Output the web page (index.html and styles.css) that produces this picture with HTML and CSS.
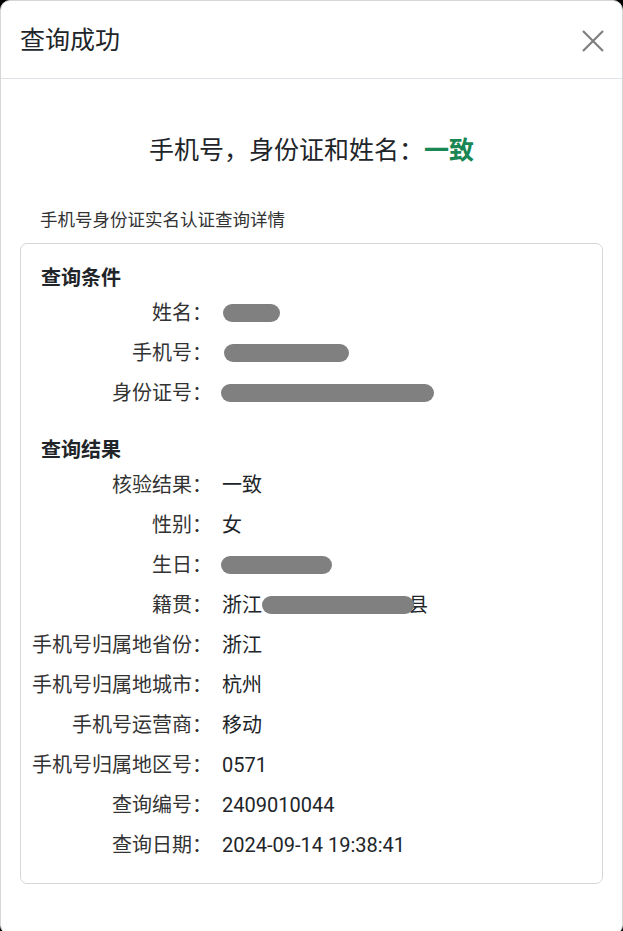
FILE: index.html
```html
<!DOCTYPE html>
<html lang="zh-CN">
<head>
    <meta charset="UTF-8">
    <meta name="viewport" content="width=device-width, initial-scale=1.0">
    <title>查询成功</title>
    <link rel="stylesheet" href="styles.css">
</head>
<body>
    <div class="modal">
        <div class="modal-header">
            <h5 class="modal-title">查询成功</h5>
            <button type="button" class="btn-close" aria-label="关闭">
                <svg width="22" height="22" viewBox="0 0 22 22">
                    <path d="M1 1 L21 21 M21 1 L1 21" stroke="#7f7f7f" stroke-width="2.2" fill="none"/>
                </svg>
            </button>
        </div>

        <div class="modal-body">
            <h4 class="result">手机号，身份证和姓名：<strong class="ok">一致</strong></h4>
            <p class="subtitle">手机号身份证实名认证查询详情</p>

            <div class="card">
                <!-- 查询条件 -->
                <h6 class="section-title">查询条件</h6>
                <div class="info-row">
                    <span class="label">姓名：</span>
                    <span class="value"><span class="mask mask-name"></span></span>
                </div>
                <div class="info-row">
                    <span class="label">手机号：</span>
                    <span class="value"><span class="mask mask-phone"></span></span>
                </div>
                <div class="info-row">
                    <span class="label">身份证号：</span>
                    <span class="value"><span class="mask mask-id"></span></span>
                </div>

                <!-- 查询结果 -->
                <h6 class="section-title second">查询结果</h6>
                <div class="info-row">
                    <span class="label">核验结果：</span>
                    <span class="value">一致</span>
                </div>
                <div class="info-row">
                    <span class="label">性别：</span>
                    <span class="value">女</span>
                </div>
                <div class="info-row">
                    <span class="label">生日：</span>
                    <span class="value"><span class="mask mask-birth"></span></span>
                </div>
                <div class="info-row">
                    <span class="label">籍贯：</span>
                    <span class="value">浙江<span class="mask mask-addr"></span>县</span>
                </div>
                <div class="info-row">
                    <span class="label">手机号归属地省份：</span>
                    <span class="value">浙江</span>
                </div>
                <div class="info-row">
                    <span class="label">手机号归属地城市：</span>
                    <span class="value">杭州</span>
                </div>
                <div class="info-row">
                    <span class="label">手机号运营商：</span>
                    <span class="value">移动</span>
                </div>
                <div class="info-row">
                    <span class="label">手机号归属地区号：</span>
                    <span class="value">0571</span>
                </div>
                <div class="info-row">
                    <span class="label">查询编号：</span>
                    <span class="value">2409010044</span>
                </div>
                <div class="info-row">
                    <span class="label">查询日期：</span>
                    <span class="value">2024-09-14 19:38:41</span>
                </div>
            </div>
        </div>
    </div>
</body>
</html>
```

FILE: styles.css
```css
html, body {
    margin: 0;
    padding: 0;
    height: 100%;
    overflow: hidden;
}

body {
    background-color: #000;
    font-family: Roboto, "Noto Sans CJK SC", sans-serif;
    color: #212529;
}

.modal {
    box-sizing: border-box;
    width: 623px;
    height: 935px;
    background: #fff;
    border: 1px solid #d6d6d6;
    border-radius: 10px;
    overflow: hidden;
}

.modal-header {
    display: flex;
    align-items: center;
    justify-content: space-between;
    padding: 21px 18px 18px 19px;
    border-bottom: 1px solid #dee2e6;
}

.modal-title {
    margin: 0;
    font-size: 25px;
    line-height: 38px;
    font-weight: 400;
    color: #212529;
}

.btn-close {
    display: flex;
    padding: 0;
    border: none;
    background: none;
    cursor: pointer;
}

.modal-body {
    padding: 0 19px 20px;
}

.result {
    margin: 53px 0 37px;
    text-align: center;
    font-size: 25px;
    line-height: 38px;
    font-weight: 400;
    color: #212529;
}

.result .ok {
    color: #198754;
    font-weight: 700;
}

.subtitle {
    margin: 0 0 10px;
    padding-left: 20px;
    font-size: 17.5px;
    line-height: 26px;
    color: #333;
}

.card {
    border: 1px solid #d6d6d6;
    border-radius: 7px;
    padding: 19px 20px 18px;
}

.section-title {
    margin: 0;
    font-size: 20px;
    line-height: 30px;
    font-weight: 700;
    color: #212529;
}

.section-title.second {
    margin-top: 22px;
}

.info-row {
    display: grid;
    grid-template-columns: 181px 1fr;
    column-gap: 10px;
    margin-left: -10px;
    font-size: 20px;
    line-height: 40px;
    color: #333;
}

.label {
    text-align: right;
    white-space: nowrap;
}

.value {
    display: flex;
    align-items: center;
    color: #212529;
}

.mask {
    display: inline-block;
    height: 18px;
    border-radius: 9px;
    background-color: #808080;
}

.mask-name {
    width: 57px;
    margin-left: 1px;
}

.mask-phone {
    width: 125px;
    margin-left: 2px;
}

.mask-id {
    width: 213px;
    margin-left: -1px;
}

.mask-birth {
    width: 111px;
    margin-left: -1px;
}

.mask-addr {
    position: relative;
    width: 152px;
    margin-right: -6px;
}
```
